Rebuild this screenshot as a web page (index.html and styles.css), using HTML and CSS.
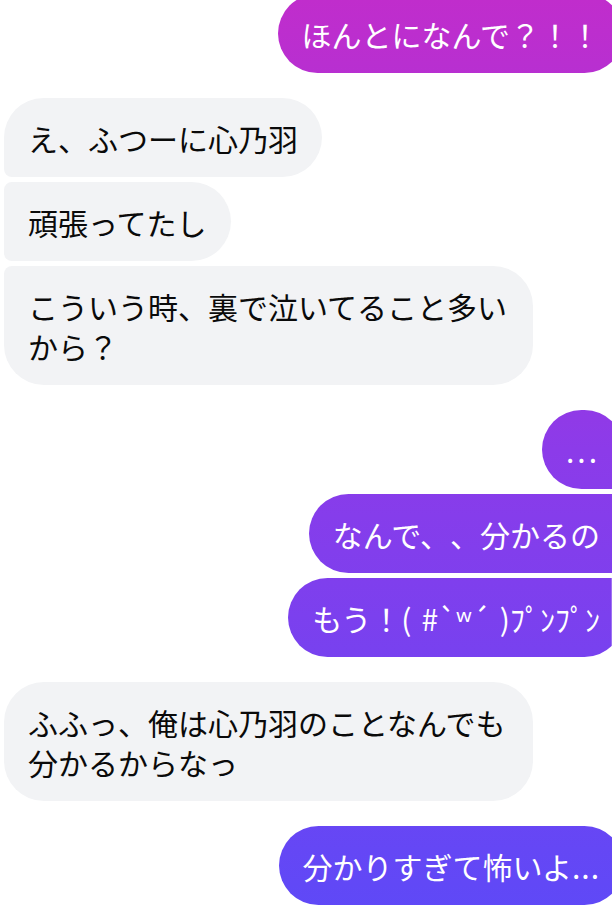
FILE: index.html
```html
<!DOCTYPE html>
<html lang="ja">
<head>
<meta charset="utf-8">
<title>Chat</title>
<link rel="stylesheet" href="styles.css">
</head>
<body>
<div class="chat">
  <div class="group out">
    <div class="msg">ほんとになんで？！！</div>
  </div>
  <div class="group in">
    <div class="msg">え、ふつーに心乃羽</div>
    <div class="msg">頑張ってたし</div>
    <div class="msg">こういう時、裏で泣いてること多いから？</div>
  </div>
  <div class="group out">
    <div class="msg"><span class="dots">...</span></div>
    <div class="msg">なんで、、分かるの</div>
    <div class="msg">もう！(&#8196;#`ʷ´&#8196;)ﾌﾟﾝﾌﾟﾝ</div>
  </div>
  <div class="group in">
    <div class="msg">ふふっ、俺は心乃羽のことなんでも分かるからなっ</div>
  </div>
  <div class="group out">
    <div class="msg">分かりすぎて怖いよ<span class="dots tight">...</span></div>
  </div>
</div>
</body>
</html>
```

FILE: styles.css
```css
html, body {
  margin: 0;
  padding: 0;
  background: #ffffff;
  overflow: hidden;
}

.chat {
  display: flex;
  flex-direction: column;
  gap: 25px;
  margin: -6px -12px 0 4px;
}

.group {
  display: flex;
  flex-direction: column;
  gap: 5px;
}

.group.in {
  align-items: flex-start;
}

.group.out {
  align-items: flex-end;
}

.msg {
  font-family: "Noto Sans CJK JP", "Noto Sans", sans-serif;
  font-size: 30px;
  line-height: 40px;
  padding: 19.5px 24px;
  border-radius: 40px;
  max-width: 529px;
  box-sizing: border-box;
  white-space: pre-wrap;
  text-spacing-trim: space-all;
}

.dots {
  letter-spacing: 3px;
}

.dots.tight {
  letter-spacing: 1px;
}

.in .msg {
  background: #f2f3f5;
  color: #0a0a0a;
}

.out .msg {
  color: #ffffff;
  background-image: linear-gradient(to bottom, #c02dcc 0px, #8c3be9 450px, #5e49f7 916px);
  background-attachment: fixed;
}

.in .msg:not(:last-child) {
  border-bottom-left-radius: 8px;
}

.in .msg:not(:first-child) {
  border-top-left-radius: 8px;
}

.out .msg:not(:last-child) {
  border-bottom-right-radius: 8px;
}

.out .msg:not(:first-child) {
  border-top-right-radius: 8px;
}
```
